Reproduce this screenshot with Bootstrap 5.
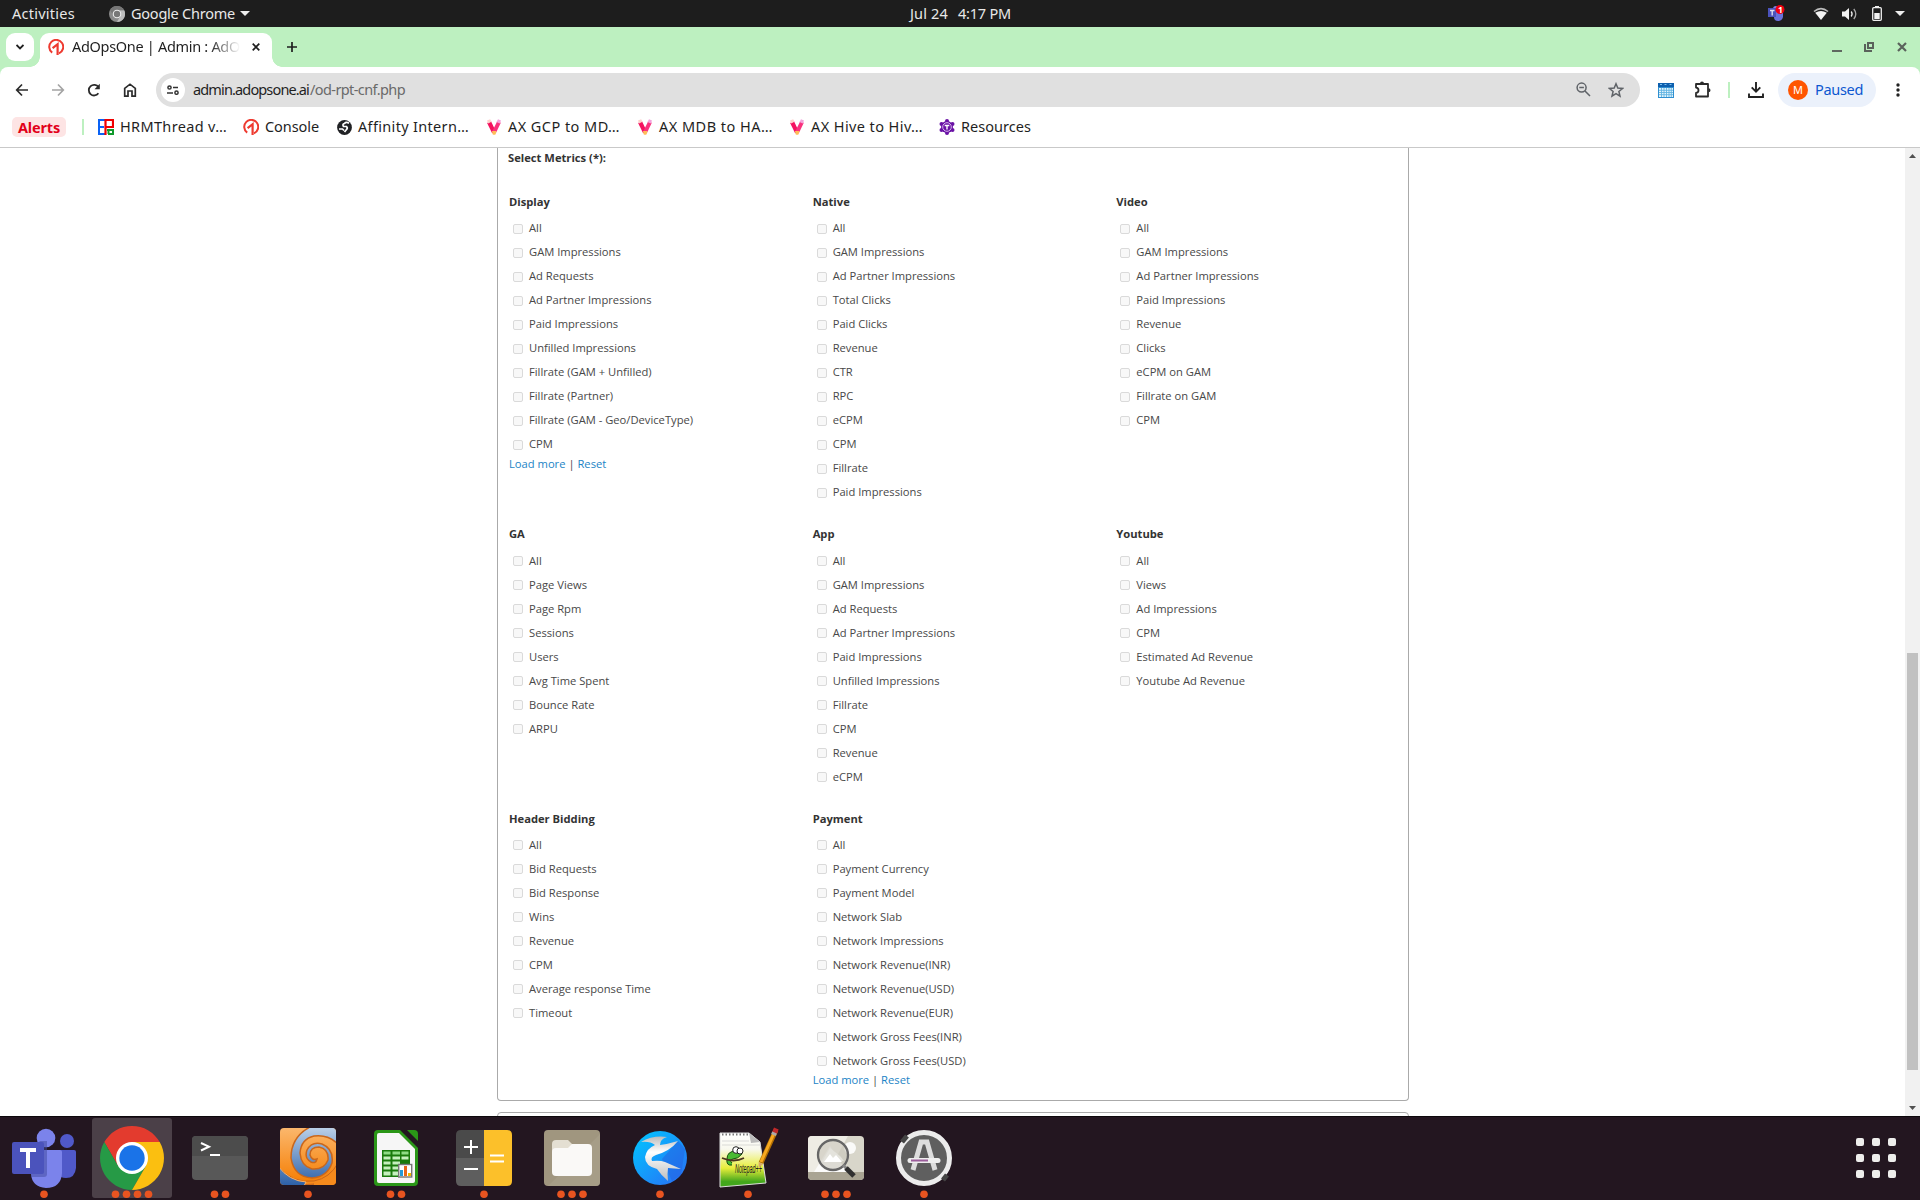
<!DOCTYPE html>
<html lang="en">
<head>
<meta charset="utf-8">
<title>AdOpsOne | Admin</title>
<link rel="stylesheet" href="https://cdn.jsdelivr.net/npm/bootstrap@5.3.0/dist/css/bootstrap.min.css">
<style>
body{width:1920px;height:1200px;overflow:hidden;background:#fff;font-family:"Noto Sans","Open Sans",sans-serif;font-size:14.5px;line-height:20px;color:#1f1f1f}
svg{display:block;flex:none}
.fit{white-space:nowrap;display:block;flex:none;padding-bottom:2px}
.sysbar{height:27px;background:#1d1d1d;color:#e8e8e8;padding-left:12px}
.tabstrip{height:40px;background:#bdf0c0;padding:6px 0 0 6px}
.tabmenu{width:28px;height:28px;border-radius:9px;background:#fff}
.tab-on{width:232px;height:34px;background:#fff;border-radius:9px 9px 0 0;margin-left:6px;padding-left:8px;position:relative}
.tab-on::before,.tab-on::after{content:"";position:absolute;bottom:0;width:10px;height:10px}
.tab-on::before{left:-10px;background:radial-gradient(circle at 0 0,transparent 9.5px,#fff 10px)}
.tab-on::after{right:-10px;background:radial-gradient(circle at 100% 0,transparent 9.5px,#fff 10px)}
.tabtitle{width:168px;margin-left:8px;-webkit-mask-image:linear-gradient(90deg,#000 138px,transparent 168px)}
.chromebg{background:#bdf0c0}
.toolbar{height:46px;background:#fff;border-radius:8px 8px 0 0;padding-left:14px}
.omni{width:1484px;height:34px;border-radius:17px;background:#e0e0e0;padding-left:5px}
.siteinfo{width:24px;height:24px;border-radius:50%;background:#fff}
.vsep{width:2px;height:16px;background:#bdf0c0;flex:none}
.paused{width:98px;height:34px;border-radius:17px;background:#ebf1fb;color:#0b57d0;padding-left:10px}
.avatar{width:20px;height:20px;border-radius:50%;background:#ff5500;color:#fff;font-size:11px;line-height:20px}
.bookmarks{height:35px;background:#fff;border-bottom:1px solid #c9c9c9;padding:0 0 6px 12px}
.alerts{width:54px;height:20px;flex:none;border-radius:5px;background:#fde4e4;color:#e2001a;font-weight:700;padding-left:6px}
.alerts .fit{line-height:18px}
.view{height:968px}
.pagearea{width:1905px;padding-left:497px;overflow:hidden;font-family:"Open Sans",sans-serif;font-size:11.2px;line-height:16px;color:#484848}
.pagearea .fit{padding-bottom:0;margin-left:-1px}
.box-metrics{width:912px;height:953px;border:1px solid #aaa;border-top:0;border-radius:0 0 4px 4px;padding:2px 0 0 11px}
.box-next{width:912px;height:40px;border:1px solid #aaa;border-radius:4px;margin-top:11px}
.metric-title{height:16px;font-weight:700;color:#333}
.metric-grid{width:911px;margin-top:22px}
.metric-col{width:303.67px}
.hd{height:28px;line-height:28px;font-weight:700;color:#333}
.metric{height:24px;padding-left:4px}
.metric input{appearance:none;width:10px;height:10px;margin:2px 6px 0 0;border:1px solid #dadada;border-radius:2px;background:#f8f8f8;flex:none}
.grp{margin-bottom:16px}
.grp + .grp .metric span{padding-top:2px}
.grp:nth-child(3) .hd{line-height:29px}
.more a{color:#1c84c6;text-decoration:none}
.sbar{width:15px;background:#f1f1f1;height:968px;padding:6px 0}
.thumb{width:11px;height:417px;background:#c1c1c1;margin-top:495px}
.dock{height:84px;background:#231620;border-top:1px solid #0d080c}
.dockitem{width:88px;height:83px}
</style>
<script src="https://cdn.jsdelivr.net/npm/bootstrap@5.3.0/dist/js/bootstrap.bundle.min.js"></script>
</head>
<body>
<svg width="0" height="0" class="position-absolute">
<defs>
<symbol id="one" viewBox="0 0 16 16"><path d="M4.2 13.6A7 7 0 1 1 11 14.3" fill="none" stroke="#ee3a30" stroke-width="2"/><path d="M4.6 9.2L9.6 5.2V16" fill="none" stroke="#ee3a30" stroke-width="2.2"/></symbol>
<symbol id="vee" viewBox="0 0 16 16"><path d="M3 3L8 13.3" stroke="#f4125f" stroke-width="4.2"/><path d="M13 3L8 13.3" stroke="#f9317d" stroke-width="4"/><path d="M1 1.6l3.2-1.4 1.3 2.6-3.3 1.7z" fill="#ffd0cc"/><path d="M15 1.6L12 .2l-1.500 2.8 3.200 1.600z" fill="#f3a3dc"/><path d="M6 12h4.400L9.700 15.200Q8 16.500 6.600 15.200z" fill="#ffbd59"/></symbol>
<linearGradient id="gsw" x2="0" y2="1"><stop stop-color="#fbb76c"/><stop offset="1" stop-color="#f57c00"/></linearGradient>
<linearGradient id="gbl" gradientUnits="userSpaceOnUse" x1="0" y1="12" x2="0" y2="70"><stop stop-color="#b9cfe8"/><stop offset="1" stop-color="#2b5fa6"/></linearGradient>
<linearGradient id="gbd" x2="1" y2="1"><stop stop-color="#00c8ff"/><stop offset="1" stop-color="#2a6cf5"/></linearGradient>
<linearGradient id="gnp" x2="0" y2="1"><stop stop-color="#fff"/><stop offset=".3" stop-color="#f8f8ee"/><stop offset=".65" stop-color="#e9ee3a"/><stop offset=".9" stop-color="#43a61c"/></linearGradient>
<linearGradient id="gwg" x2="0" y2="1"><stop stop-color="#bbb"/><stop offset=".35" stop-color="#fff"/><stop offset="1" stop-color="#bdbdbd"/></linearGradient>
<clipPath id="swc"><rect x="16" y="12" width="56" height="57" rx="4"/></clipPath>
</defs>
</svg>

<header class="sysbar d-flex align-items-center">
  <span class="fit" data-w="63">Activities</span>
  <svg width="16" height="16" style="margin-left:34px" viewBox="0 0 16 16"><circle cx="8" cy="8" r="8" fill="#8b8b8b"/><path d="M8 4.300H15.200A8 8 0 0 1 8 16l3.300-6z" fill="#bdbdbd"/><path d="M1 4.200A8 8 0 0 1 15 4.300H8a4 4 0 0 0-3.300 5.500z" fill="#777"/><circle cx="8" cy="8" r="4.300" fill="#eee"/><circle cx="8" cy="8" r="3.200" fill="#777"/></svg>
  <span class="fit" style="margin-left:6px" data-w="104">Google Chrome</span>
  <svg width="10" height="5" style="margin-left:5px"><path d="M0 0h10L5 5z" fill="#eee"/></svg>
  <span class="fit" style="margin-left:660px" data-w="38">Jul 24</span>
  <span class="fit" style="margin-left:10px" data-w="53">4:17 PM</span>
  <svg width="17" height="17" style="margin-left:757px" viewBox="0 0 17 17"><circle cx="8" cy="4" r="3" fill="#7b83eb"/><path d="M6 7h9v5q-1 4-5 4t-4-4z" fill="#6a72dc"/><rect y="3" width="8" height="9" fill="#4b53bc"/><path d="M2 5.500h4.500M4.200 5.500v5" stroke="#dde" stroke-width="1.400"/><circle cx="12" cy="4.500" r="4.500" fill="#f00010"/><text x="9.900" y="7.600" font-size="8.500" font-weight="700" fill="#fff">1</text></svg>
  <svg width="16" height="14" style="margin-left:28px" viewBox="0 0 16 14"><path d="M1 4.500Q8-1.200 15 4.500" fill="none" stroke="#bbb" stroke-width="1.600"/><path d="M2.200 5.800Q8 2 13.800 5.800L8 13z" fill="#f2f2f2"/></svg>
  <svg width="16" height="14" style="margin-left:13px" viewBox="0 0 16 14"><path d="M0 4.500h3L7 1v12L3 9.500H0z" fill="#f2f2f2"/><path d="M9.200 4.500q1.800 2.500 0 5" fill="none" stroke="#eee" stroke-width="1.300"/><path d="M11.800 2q4 5 0 10" fill="none" stroke="#aaa" stroke-width="1.300"/></svg>
  <svg width="10" height="15" style="margin-left:14px" viewBox="0 0 10 15"><path d="M3 0h4v2H3z" fill="#eee"/><rect x=".7" y="1.700" width="8.600" height="12.600" fill="none" stroke="#eee" stroke-width="1.300" rx="1"/><rect x="2.300" y="7" width="5.400" height="6" fill="#f2f2f2"/></svg>
  <svg width="10" height="5" style="margin-left:13px"><path d="M0 0h10L5 5z" fill="#eee"/></svg>
</header>

<div class="tabstrip d-flex">
  <div class="tabmenu d-flex align-items-center justify-content-center"><svg width="8" height="6"><path d="M.5 1L4 4.500 7.500 1" fill="none" stroke="#1f1f1f" stroke-width="1.800"/></svg></div>
  <div class="tab-on d-flex align-items-center" style="padding-bottom:6px">
    <svg width="16" height="16"><use href="#one"/></svg>
    <div class="tabtitle"><span class="fit" data-w="168">AdOpsOne | Admin : AdO</span></div>
    <svg width="8" height="8" style="margin-left:12px"><path d="M.7.7l6.600 6.600M7.300.7L.7 7.300" stroke="#1f1f1f" stroke-width="1.700"/></svg>
  </div>
  <svg width="10" height="10" style="margin:9px 0 0 15px"><path d="M5 0v10M0 5h10" stroke="#1f1f1f" stroke-width="1.700"/></svg>
  <div class="ms-auto d-flex" style="padding-right:13px">
    <svg width="10" height="12" style="margin-top:7px"><path d="M0 11h10" stroke="#5f6860" stroke-width="2"/></svg>
    <svg width="10" height="10" style="margin:9px 0 0 22px"><path d="M1 2v7h7" fill="none" stroke="#5a625b" stroke-width="2"/><rect x="4" y="1" width="5" height="5" fill="none" stroke="#5a625b" stroke-width="2"/></svg>
    <svg width="10" height="10" style="margin:9px 0 0 23px"><path d="M1 1l8 8M9 1L1 9" stroke="#5a625b" stroke-width="2.200"/></svg>
  </div>
</div>

<div class="chromebg">
<nav class="toolbar d-flex align-items-center" aria-label="Browser toolbar">
  <svg width="16" height="16" viewBox="0 0 16 16"><path d="M14 8H3M8 2.500L2.700 8 8 13.500" fill="none" stroke="#2b2b2b" stroke-width="1.700"/></svg>
  <svg width="16" height="16" style="margin-left:20px" viewBox="0 0 16 16"><path d="M2 8h11M8 2.500L13.300 8 8 13.500" fill="none" stroke="#a4a4a4" stroke-width="1.700"/></svg>
  <svg width="16" height="16" style="margin-left:20px" viewBox="0 0 16 16"><path d="M12.400 11.300A5.300 5.300 0 1 1 12.500 5.200" fill="none" stroke="#2b2b2b" stroke-width="1.800"/><path d="M13.800 1.800v5.400H8.500z" fill="#2b2b2b"/></svg>
  <svg width="16" height="16" style="margin-left:20px" viewBox="0 0 16 16"><path d="M2.700 6.300L8 2.200l5.300 4.100v7.900H10V9H6v5.200H2.700z" fill="none" stroke="#2b2b2b" stroke-width="1.700"/></svg>
  <div class="omni d-flex align-items-center" style="margin-left:18px">
    <div class="siteinfo d-flex align-items-center justify-content-center"><svg width="12" height="10"><g fill="none" stroke="#333" stroke-width="1.500"><circle cx="2.500" cy="2.500" r="1.600"/><path d="M6 2.500h5M0 8h6"/><circle cx="9.500" cy="7.700" r="1.600"/></g></svg></div>
    <span class="fit" style="margin-left:8px" data-w="116">admin.adopsone.ai</span>
    <span class="fit" style="margin-left:1px;color:#6a6a6a" data-w="95">/od-rpt-cnf.php</span>
    <div class="ms-auto d-flex" style="padding-right:16px">
      <svg width="15" height="15" viewBox="0 0 15 15"><g fill="none" stroke="#5f6368" stroke-width="1.500"><circle cx="5.600" cy="5.600" r="4.500"/><path d="M9 9l5 5M3.300 5.600h4.600"/></g></svg>
      <svg width="16" height="16" style="margin-left:17px" viewBox="0 0 16 16"><path d="M8 1.800l1.800 4.300 4.700.4-3.600 3 1.100 4.600L8 11.700l-4 2.400 1.100-4.600-3.600-3 4.700-.4z" fill="none" stroke="#5f6368" stroke-width="1.500"/></svg>
    </div>
  </div>
  <svg width="16" height="15" style="margin-left:18px" viewBox="0 0 16 15"><rect width="16" height="15" fill="#2f8fd0"/><rect width="16" height="4" fill="#0d5fae"/><path d="M2 1.500h2M6.500 1.500h2M11.500 1.500h2" stroke="#7cc3f0"/><path d="M1 5h14v9H1z" fill="#e4f4fc"/><path d="M1 7.300h14M1 9.500h14M1 11.700h14M3.500 5v9M6 5v9M8.500 5v9M11 5v9M13.300 5v9" stroke="#62b4e2" stroke-width=".9"/></svg>
  <svg width="18" height="18" style="margin-left:20px" viewBox="0 0 18 18"><path d="M2 3h12v12.500H2v-3.500q2.500-.3 2.500-2.700T2 6.500z" fill="none" stroke="#2b2b2b" stroke-width="1.800" stroke-linejoin="round"/><path d="M6 2.500a2 2 0 0 1 4 0zM14.500 7.300a2 2 0 0 1 0 4z" fill="#2b2b2b"/></svg>
  <div class="vsep" style="margin-left:16px"></div>
  <svg width="16" height="16" style="margin-left:18px" viewBox="0 0 16 16"><path d="M8 0v9M3.700 5.300L8 9.600l4.300-4.300M1 11.500V15h14v-3.500" fill="none" stroke="#222" stroke-width="1.900"/></svg>
  <div class="paused d-flex align-items-center" style="margin-left:14px"><div class="avatar text-center">M</div><span class="fit" style="margin-left:7px" data-w="48">Paused</span></div>
  <svg width="4" height="14" style="margin-left:20px"><g fill="#222"><circle cx="2" cy="2" r="1.700"/><circle cx="2" cy="7" r="1.700"/><circle cx="2" cy="12" r="1.700"/></g></svg>
</nav>
</div>

<div class="bookmarks d-flex align-items-center">
  <div class="alerts"><span class="fit" data-w="42">Alerts</span></div>
  <div class="vsep" style="margin-left:16px"></div>
  <svg width="16" height="16" style="margin-left:14px" viewBox="0 0 16 16"><rect width="16" height="16" fill="#fff"/><g fill="none" stroke-width="2"><path d="M7 1H1v14h6M1 8h5" stroke="#0a62f5"/><path d="M10 15h5v-5M9 11h6M10.500 10v5" stroke="#109a2c"/><path d="M7.500 0v16M7 1h8v7H7" stroke="#f00000" stroke-width="2.200"/></g></svg>
  <span class="fit" style="margin-left:6px" data-w="107">HRMThread v…</span>
  <svg width="16" height="16" style="margin-left:16px"><use href="#one"/></svg>
  <span class="fit" style="margin-left:6px" data-w="54">Console</span>
  <svg width="15" height="15" style="margin-left:18px" viewBox="0 0 15 15"><circle cx="7.500" cy="7.500" r="7.400" fill="#202124"/><path d="M12 3.200Q9 1.500 7.500 3.500 5 4 6.500 6.500h3q1.500 1.500 0 3l-2 2.500M2 9h3.500l1.500 1.500" fill="none" stroke="#fff" stroke-width="1.700"/></svg>
  <span class="fit" style="margin-left:6px" data-w="111">Affinity Intern…</span>
  <svg width="16" height="16" style="margin-left:17px"><use href="#vee"/></svg>
  <span class="fit" style="margin-left:6px" data-w="112">AX GCP to MD…</span>
  <svg width="16" height="16" style="margin-left:17px"><use href="#vee"/></svg>
  <span class="fit" style="margin-left:6px" data-w="114">AX MDB to HA…</span>
  <svg width="16" height="16" style="margin-left:16px"><use href="#vee"/></svg>
  <span class="fit" style="margin-left:6px" data-w="112">AX Hive to Hiv…</span>
  <svg width="16" height="16" style="margin-left:16px" viewBox="0 0 16 16"><g fill="#6a12a5"><circle cx="8" cy="8" r="6"/><circle cx="8" cy="2" r="2"/><circle cx="8" cy="14" r="2"/><circle cx="2.500" cy="5" r="2"/><circle cx="13.500" cy="5" r="2"/><circle cx="2.500" cy="11" r="2"/><circle cx="13.500" cy="11" r="2"/></g><circle cx="8" cy="8" r="4.300" fill="none" stroke="#d9b8ee"/><path d="M5.700 6.500h4.600M8 6.500v4" stroke="#fff" stroke-width="1.400"/></svg>
  <span class="fit" style="margin-left:6px" data-w="70">Resources</span>
</div>

<div class="view d-flex">
  <main class="pagearea">
    <section class="box-metrics">
      <div class="metric-title"><span class="fit" data-w="98">Select Metrics (*):</span></div>
      <div class="metric-grid d-flex flex-column" id="grid"></div>
    </section>
    <section class="box-next"></section>
  </main>
  <aside class="sbar d-flex flex-column align-items-center">
    <svg width="7" height="4"><path d="M0 4h7L3.500 0z" fill="#505050"/></svg>
    <div class="thumb"></div>
    <svg class="mt-auto" width="7" height="4"><path d="M0 0h7L3.500 4z" fill="#505050"/></svg>
  </aside>
</div>

<footer class="dock d-flex" id="dock">
  <div class="dockitem" data-n="1"><svg width="88" height="83" viewBox="0 1 88 83"><circle cx="67" cy="25" r="7" fill="#5059c9"/><path d="M58 34h16q2 0 2 2v16q-1 10-10 10-6 0-8-4z" fill="#5059c9"/><circle cx="46" cy="22" r="9.300" fill="#7b83eb"/><path d="M31 34h29q2 0 2 2v21q-1 15-16 15-14-1-15-14z" fill="#7b83eb"/><path d="M40 25h7v33q0 3-3 3H31V34z" fill="#424a9c" opacity=".5"/><rect x="12" y="26" width="32" height="32" rx="2" fill="#4b53bc"/><path d="M20 34h16M28 34v18" stroke="#fff" stroke-width="4"/></svg></div>
  <div class="dockitem" data-n="4"><svg width="88" height="83" viewBox="0 1 88 83"><rect x="4" y="2" width="80" height="80" rx="3" fill="#4b4048"/><path d="M16.300 26A32 32 0 0 1 71.700 26H44L30.100 50z" fill="#e33b2e"/><path d="M16.300 26L30.100 50 57.900 50 44 74A32 32 0 0 1 16.300 26z" fill="#269a46"/><path d="M71.700 26A32 32 0 0 1 44 74L57.900 50 44 26z" fill="#fbbf10"/><circle cx="44" cy="42" r="16" fill="#fff"/><circle cx="44" cy="42" r="12.700" fill="#1a73e8"/></svg></div>
  <div class="dockitem" data-n="2"><svg width="88" height="83" viewBox="0 1 88 83"><rect x="16" y="20" width="56" height="44" rx="4" fill="#585858"/><path d="M16 40V24q0-4 4-4h48q4 0 4 4v16z" fill="#4c4c4c"/><path d="M25 27l8 3.700-8 3.800" fill="none" stroke="#fff" stroke-width="2"/><path d="M34 39h10" stroke="#fff" stroke-width="2"/></svg></div>
  <div class="dockitem" data-n="1"><svg width="88" height="83" viewBox="0 1 88 83"><g clip-path="url(#swc)"><rect x="16" y="12" width="56" height="57" fill="url(#gsw)"/><path d="M48 10h26v18Q64 18 50 20 37 23 36 37q1 13 12 16 12 1 16-9 1-11-9-13-9 0-9 8 2 6 7 4-1 5-6 3-7-4-4-12 5-9 15-6 12 5 10 19-5 14-20 15-18-1-21-20Q27 20 48 10z" fill="url(#gbl)" stroke="#c9671c" stroke-width="1.500"/><path d="M14 50Q28 68 50 65q16-3 24-18v24H44l6-3q-22 3-34-6z" fill="#f58a1c" stroke="#c9671c"/><path d="M14 50q11 15 28 16l-2 4H14z" fill="url(#gbl)" stroke="#f9b36a"/></g></svg></div>
  <div class="dockitem" data-n="2"><svg width="88" height="83" viewBox="0 1 88 83"><path d="M26 14h22l18 18v34q0 4-4 4H26q-4 0-4-4V18q0-4 4-4z" fill="#2a9617"/><path d="M27 17h20l16 16v32q0 2-2 2H27q-2 0-2-2V19q0-2 2-2z" fill="#f6f6f6"/><path d="M55 14h7q4 0 4 4v7z" fill="#2a9617"/><rect x="30" y="34" width="28" height="27" fill="#1a7a0c"/><path d="M31.500 35.500h7v3h-7zM40.500 35.500h7.500v3h-7.500zM49.500 35.500h7v3h-7z" fill="#8fdc85"/><g fill="#c5f0bd"><path d="M31.500 40.500h7v3h-7zM40.500 40.500H48v3h-7.500zM49.500 40.500h7v3h-7zM31.500 45.500h7v3h-7zM40.500 45.500H48v3h-7.500zM31.500 50.500h7v3h-7zM40.500 50.500H48v3h-7.500zM31.500 55.500h7v4h-7zM40.500 55.500H48v4h-7.500z"/></g><rect x="46.700" y="48.500" width="13" height="12.500" fill="#fff" stroke="#777" stroke-width="1.400"/><path d="M48 54h3v6h-3z" fill="#2499d8"/><path d="M52 50h3v10h-3z" fill="#e8661a"/><path d="M56 57h3v3h-3z" fill="#f0b800"/></svg></div>
  <div class="dockitem" data-n="1"><svg width="88" height="83" viewBox="0 1 88 83"><path d="M44 14H21q-5 0-5 5v23h28z" fill="#4a4a4a"/><path d="M44 70H21q-5 0-5-5V42h28z" fill="#5e5e5e"/><path d="M44 14h23q5 0 5 5v46q0 5-5 5H44z" fill="#fcc02a"/><path d="M31 24v14M24 31h14M24 53h14M50 39.500h14M50 45.500h14" stroke="#fff" stroke-width="2"/></svg></div>
  <div class="dockitem" data-n="3"><svg width="88" height="83" viewBox="0 1 88 83"><rect x="16" y="14" width="56" height="56" rx="4" fill="#a0967f"/><path d="M72 18v48q0 4-4 4H20z" fill="#aaa18c" opacity=".6"/><path d="M24 28q0-4 4-4h12l5 5v10H24z" fill="#e4dfd2"/><path d="M24 36q0-4 4-4h12l4-4h16q4 0 4 4v24q0 4-4 4H28q-4 0-4-4z" fill="#faf9f7"/></svg></div>
  <div class="dockitem" data-n="1"><svg width="88" height="83" viewBox="0 1 88 83"><circle cx="44" cy="42" r="27" fill="url(#gbd)"/><path d="M62 25l7 8-4 26-9 6-10-22z" fill="#2360df" opacity=".5"/><path d="M25 26q12-7 26-5-7 2-7 8 8-1 18-4-8 10-22 14-6 2-4 6 8-1 13 1l16 7-13-1q-1 6 0 13-7-6-11-12-12-3-12-12 2-9 10-12-5-4-14-3z" fill="url(#gwg)"/></svg></div>
  <div class="dockitem" data-n="1"><svg width="88" height="83" viewBox="0 1 88 83"><path d="M16 17h29l11 9 6 41-46 4z" fill="url(#gnp)" stroke="#ddd"/><path d="M45 17l11 9-9 1z" fill="#bbb"/><path d="M18 18.500h26" stroke="#777" stroke-width="2" stroke-dasharray="1.500 2"/><path d="M18 25h27M18 29h38" stroke="#ccc" stroke-width=".7"/><path d="M28 49q-6 1-5-6 0-8 9-8l4-2 2 5q-4 5-9 5-4 1-1 4" fill="#49bb32" stroke="#184f10"/><circle cx="32" cy="34" r="3.300" fill="#fff" stroke="#222"/><circle cx="36" cy="35" r="3" fill="#fff" stroke="#222"/><path d="M18 42q12 5 22 0" fill="none" stroke="#4a3420" stroke-width="1.800"/><text x="31" y="57" font-size="13" font-style="italic" textLength="27" lengthAdjust="spacingAndGlyphs" font-family="Liberation Sans" fill="#222">Notepad++</text><path d="M72 14L57 47" stroke="#b36f00" stroke-width="5"/><path d="M71.500 14L57 46" stroke="#f8a920" stroke-width="3"/><path d="M70.500 17l1.800-4.500" stroke="#c0282a" stroke-width="5"/><path d="M69.500 19l1-2.500" stroke="#aaa" stroke-width="5"/><path d="M54.600 46l4.500 2-4.500 4z" fill="#d8a96a"/></svg></div>
  <div class="dockitem" data-n="3"><svg width="88" height="83" viewBox="0 1 88 83"><rect x="16" y="20" width="56" height="44" rx="4" fill="#d8d6ca"/><path d="M16 56V24q0-4 4-4h36L36 56z" fill="#eeece4"/><circle cx="58" cy="32" r="6" fill="#fafaf8"/><path d="M22 56l16-26 17 26z" fill="#fbfbfa"/><path d="M16 56h56v4q0 4-4 4H20q-4 0-4-4z" fill="#a9a493"/><circle cx="41" cy="39" r="15" fill="#c9c7bb" fill-opacity=".6" stroke="#666" stroke-width="2.300"/><path d="M30 46l8-14 10 8 4 5z" fill="#e4e3dc"/><path d="M32 46l6-8 3 4 3-3 6 7z" fill="#fff"/><path d="M51 49l4 4" stroke="#888" stroke-width="3"/><path d="M54 52l8 8" stroke="#303030" stroke-width="5"/></svg></div>
  <div class="dockitem" data-n="1"><svg width="88" height="83" viewBox="0 1 88 83"><circle cx="44" cy="42" r="25.500" fill="#5f5f5f" stroke="#ececec" stroke-width="5"/><path d="M22 26l5-6M63 64l4-5" stroke="#444" stroke-width="5"/><path d="M33 54l8-28h6l8 28" fill="none" stroke="#ddd" stroke-width="5"/><path d="M30 44.500h28" stroke="#eee" stroke-width="5" stroke-linecap="round"/><path d="M31 44.500h17" stroke="#9b5d9b" stroke-width="2"/></svg></div>
  <svg class="ms-auto" width="40" height="40" style="margin:21px 24px 0 0" viewBox="0 0 40 40" id="apps"></svg>
</footer>

<script>
const sections = [
 [["Display",["All","GAM Impressions","Ad Requests","Ad Partner Impressions","Paid Impressions","Unfilled Impressions","Fillrate (GAM + Unfilled)","Fillrate (Partner)","Fillrate (GAM - Geo/DeviceType)","CPM"],1],
  ["Native",["All","GAM Impressions","Ad Partner Impressions","Total Clicks","Paid Clicks","Revenue","CTR","RPC","eCPM","CPM","Fillrate","Paid Impressions"]],
  ["Video",["All","GAM Impressions","Ad Partner Impressions","Paid Impressions","Revenue","Clicks","eCPM on GAM","Fillrate on GAM","CPM"]]],
 [["GA",["All","Page Views","Page Rpm","Sessions","Users","Avg Time Spent","Bounce Rate","ARPU"]],
  ["App",["All","GAM Impressions","Ad Requests","Ad Partner Impressions","Paid Impressions","Unfilled Impressions","Fillrate","CPM","Revenue","eCPM"]],
  ["Youtube",["All","Views","Ad Impressions","CPM","Estimated Ad Revenue","Youtube Ad Revenue"]]],
 [["Header Bidding",["All","Bid Requests","Bid Response","Wins","Revenue","CPM","Average response Time","Timeout"]],
  ["Payment",["All","Payment Currency","Payment Model","Network Slab","Network Impressions","Network Revenue(INR)","Network Revenue(USD)","Network Revenue(EUR)","Network Gross Fees(INR)","Network Gross Fees(USD)"],1]]
];
document.getElementById("grid").innerHTML = sections.map(s => '<div class="d-flex grp">' + s.map(([t, items, more]) =>
  `<div class="metric-col"><div class="hd">${t}</div>` +
  items.map(i => `<label class="metric d-flex align-items-center"><input type="checkbox" disabled><span>${i}</span></label>`).join("") +
  (more ? '<div class="more"><a href="#">Load more</a> | <a href="#">Reset</a></div>' : "") + "</div>").join("") + "</div>").join("");

// running-window dots under each launcher
document.querySelectorAll(".dockitem").forEach(d => {
  const n = +d.dataset.n;
  let dots = "";
  for (let i = 0; i < n; i++) dots += `<circle cx="${44 + (i - (n - 1) / 2) * 11}" cy="78.300" r="3.800" fill="#e95420"/>`;
  d.firstElementChild.insertAdjacentHTML("beforeend", dots);
});
let g = "";
for (let r = 0; r < 3; r++) for (let c = 0; c < 3; c++) g += `<rect x="${c * 16}" y="${r * 16}" width="8" height="8" rx="2" fill="#eeeeec"/>`;
document.getElementById("apps").innerHTML = g;

// spread each label over its slot width
document.querySelectorAll(".fit").forEach(e => {
  e.style.display = "inline-block";
  const w = e.getBoundingClientRect().width, t = +e.dataset.w;
  e.style.letterSpacing = (t - w) / e.textContent.length + "px";
  e.style.width = t + "px";
});
</script>
</body>
</html>
